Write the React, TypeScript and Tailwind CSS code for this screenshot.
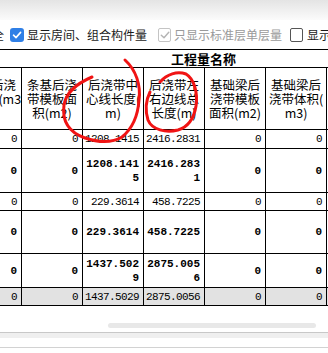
import React from "react";

const headers: string[][] = [
  ["条基后浇", "带体积(m3", ")"],
  ["条基后浇", "带模板面", "积(m2)"],
  ["后浇带中", "心线长度(", "m)"],
  ["后浇带左", "右边线总", "长度(m)"],
  ["基础梁后", "浇带模板", "面积(m2)"],
  ["基础梁后", "浇带体积(", "m3)"],
  ["", "", ""],
];

type Row = { h: string; bold: boolean; gray?: boolean; vals: string[][] };

const rows: Row[] = [
  { h: "h-[19px]", bold: false, vals: [["0"], ["0"], ["1208.1415"], ["2416.2831"], ["0"], ["0"], [""]] },
  { h: "h-[44px]", bold: true, vals: [["0"], ["0"], ["1208.141", "5"], ["2416.283", "1"], ["0"], ["0"], [""]] },
  { h: "h-[18px]", bold: false, vals: [["0"], ["0"], ["229.3614"], ["458.7225"], ["0"], ["0"], [""]] },
  { h: "h-[43px]", bold: true, vals: [["0"], ["0"], ["229.3614"], ["458.7225"], ["0"], ["0"], [""]] },
  { h: "h-[34px]", bold: true, vals: [["0"], ["0"], ["1437.502", "9"], ["2875.005", "6"], ["0"], ["0"], [""]] },
  { h: "h-[18px]", bold: false, gray: true, vals: [["0"], ["0"], ["1437.5029"], ["2875.0056"], ["0"], ["0"], [""]] },
];

function CheckedBox() {
  return (
    <span className="block w-[14px] h-[14px] rounded-[3px] bg-[#2f7fe6] flex items-center justify-center shrink-0">
      <svg width="10" height="10" viewBox="0 0 10 10">
        <path d="M1.5 5.2 L4 7.6 L8.6 2.4" fill="none" stroke="#fff" strokeWidth="1.6" strokeLinecap="round" strokeLinejoin="round" />
      </svg>
    </span>
  );
}

function DisabledBox() {
  return (
    <span className="block w-[13px] h-[14px] rounded-[2px] border border-[#c4c4c4] bg-white flex items-center justify-center shrink-0">
      <svg width="10" height="10" viewBox="0 0 10 10">
        <path d="M1.3 5.2 L4 7.8 L8.8 2.2" fill="none" stroke="#b4b4b4" strokeWidth="1.4" strokeLinecap="round" strokeLinejoin="round" />
      </svg>
    </span>
  );
}

function EmptyBox() {
  return <span className="block w-[13px] h-[14px] rounded-[2px] border border-[#555] bg-white shrink-0" />;
}

export default function App() {
  return (
    <div className="relative w-[328px] h-[353px] overflow-hidden bg-white font-['Noto_Sans_CJK_SC','Microsoft_YaHei',sans-serif] text-black">
      {/* top shade */}
      <div className="h-[20px] bg-gradient-to-b from-[#e4e4e4] to-[#fbfbfb]" />
      {/* toolbar */}
      <div className="h-[29px] flex items-center ml-[-8px] text-[12px] leading-none whitespace-nowrap">
        <span className="text-[#222]">全</span>
        <span className="ml-[6px] flex"><CheckedBox /></span>
        <span className="ml-[3px] text-[#1a1a1a]">显示房间、组合构件量</span>
        <span className="ml-[11px] flex"><DisabledBox /></span>
        <span className="ml-[3px] text-[#9a9a9a]">只显示标准层单层量</span>
        <span className="ml-[8px] flex"><EmptyBox /></span>
        <span className="ml-[4px] text-[#1a1a1a]">显示</span>
      </div>
      {/* table */}
      <div className="ml-[-39px] w-[500px] border-t border-black">
        <div className="h-[18px] border-b border-black flex items-center">
          <span className="ml-[210px] text-[13px] font-bold leading-none">工程量名称</span>
        </div>
        <div className="flex h-[62px]">
          {headers.map((h, i) => (
            <div
              key={i}
              className="w-[61px] shrink-0 border-r border-b border-black flex flex-col items-center justify-center text-[12.5px] leading-[14px] whitespace-nowrap"
            >
              {h.map((l, j) => (
                <span key={j} className="block h-[14px]">{l}</span>
              ))}
            </div>
          ))}
        </div>
        {rows.map((r, ri) => (
          <div key={ri} className={`flex ${r.h} ${r.gray ? "bg-[#e2e2e2]" : "bg-white"}`}>
            {r.vals.map((v, ci) => (
              <div
                key={ci}
                className={`w-[61px] shrink-0 border-r border-b border-black flex flex-col justify-center items-end pr-[4px] font-['Liberation_Mono',monospace] text-[11px] ${
                  r.bold ? "font-bold leading-[14px]" : "tracking-[-0.6px] leading-[14px]"
                }`}
              >
                {v.map((t, ti) => (
                  <span key={ti}>{t}</span>
                ))}
              </div>
            ))}
          </div>
        ))}
      </div>
      {/* horizontal scrollbar area */}
      <div className="mt-[17px] h-[5px] ml-[108px] w-[208px] rounded-full bg-[#e8e8e8]" />
      <div className="mt-[4px] h-[1px] bg-[#c8c8c8]" />
      <div className="h-[5px] bg-[#efefef]" />
      <div className="mt-[9px] h-[1px] bg-[#d2d2d2]" />

      {/* red annotations */}
      <svg className="absolute left-0 top-0 pointer-events-none" width="328" height="353" viewBox="0 0 328 353">
        <path
          d="M92 77 C78 83, 66 92, 64 105 C62 120, 68 132, 85 138 C100 143, 112 143, 122 137 C133 128, 138 115, 139 100 C141 85, 136 70, 125 60"
          fill="none"
          stroke="#f01414"
          strokeWidth="3"
          strokeLinecap="round"
        />
        <path
          d="M160 82 C167 74, 177 71, 186 74 C194 79, 198 92, 196 106 C194 118, 188 127, 178 130 C166 133, 152 130, 148 120 C145 110, 146 100, 150 92"
          fill="none"
          stroke="#f01414"
          strokeWidth="3"
          strokeLinecap="round"
        />
      </svg>
    </div>
  );
}
